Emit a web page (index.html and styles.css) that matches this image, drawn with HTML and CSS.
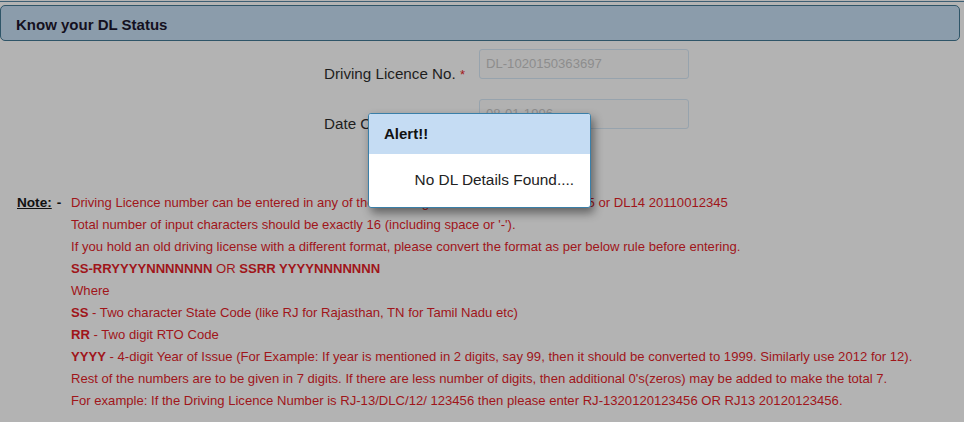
FILE: index.html
```html
<!DOCTYPE html>
<html>
<head>
<meta charset="utf-8">
<link rel="stylesheet" href="styles.css">
</head>
<body>
<div class="topline"></div>
<div class="panel-head">Know your DL Status</div>
<div class="form">
  <div class="row">
    <label class="lbl">Driving Licence No. <span class="req">*</span></label>
    <div class="inp">DL-1020150363697</div>
  </div>
  <div class="row">
    <label class="lbl">Date Of Birth <span class="req">*</span></label>
    <div class="inp">08-01-1996</div>
  </div>
</div>
<div class="note">
  <div class="note-label"><u>Note:</u><span class="dash">-</span></div>
  <div class="note-lines">
    <div>Driving Licence number can be entered in any of the following formats DL-1420110012345 or DL14 20110012345</div>
    <div>Total number of input characters should be exactly 16 (including space or '-').</div>
    <div>If you hold an old driving license with a different format, please convert the format as per below rule before entering.</div>
    <div><b>SS-RRYYYYNNNNNNN</b> OR <b>SSRR YYYYNNNNNNN</b></div>
    <div>Where</div>
    <div><b>SS</b> - Two character State Code (like RJ for Rajasthan, TN for Tamil Nadu etc)</div>
    <div><b>RR</b> - Two digit RTO Code</div>
    <div><b>YYYY</b> - 4-digit Year of Issue (For Example: If year is mentioned in 2 digits, say 99, then it should be converted to 1999. Similarly use 2012 for 12).</div>
    <div>Rest of the numbers are to be given in 7 digits. If there are less number of digits, then additional 0's(zeros) may be added to make the total 7.</div>
    <div>For example: If the Driving Licence Number is RJ-13/DLC/12/ 123456 then please enter RJ-1320120123456 OR RJ13 20120123456.</div>
  </div>
</div>
<div class="modal">
  <div class="modal-head">Alert!!</div>
  <div class="modal-body">No DL Details Found....</div>
</div>
</body>
</html>
```
FILE: styles.css
```css
html, body {
  margin: 0;
  padding: 0;
}
body {
  background: #b3b3b3;
  font-family: "Liberation Sans", Arial, sans-serif;
  width: 964px;
  height: 422px;
  overflow: hidden;
  position: relative;
}
.topline {
  height: 1px;
  margin-top: 1px;
  background: #3d5f74;
  margin-bottom: 3px;
}
.panel-head {
  border: 1px solid #2f5568;
  border-radius: 5px;
  background: #8b9cab;
  color: #141020;
  font-weight: bold;
  font-size: 15px;
  line-height: 37px;
  padding-left: 15px;
  box-sizing: border-box;
  width: 960px;
  height: 36px;
}
.form {
  display: flex;
  flex-direction: column;
  gap: 17px;
  margin-top: 8px;
}
.row {
  display: grid;
  grid-template-columns: 155px 210px;
  column-gap: 0;
  padding-left: 324px;
}
.lbl {
  text-align: left;
  font-size: 15.2px;
  color: #1e1e1e;
  padding-top: 16px;
}
.req {
  color: #a31a1a;
  font-size: 13px;
}
.inp {
  height: 30px;
  box-sizing: border-box;
  border: 1px solid #97a3ad;
  border-radius: 3px;
  background: #b1b1b1;
  color: #8d8d8d;
  font-size: 13.1px;
  line-height: 28px;
  padding-left: 6px;
}
.note {
  display: flex;
  margin-top: 60px;
  font-size: 13.1px;
  line-height: 22px;
  color: #a0151a;
}
.note-label {
  width: 54px;
  padding-left: 17px;
  font-weight: bold;
  font-size: 13.6px;
  color: #111;
  flex: none;
}
.dash {
  margin-left: 5px;
}
.note-lines b {
  font-weight: bold;
}
.modal {
  position: absolute;
  left: 368px;
  top: 113px;
  width: 223px;
  height: 95px;
  box-sizing: border-box;
  border: 1px solid #3a7fa8;
  border-radius: 3px;
  background: #fff;
  box-shadow: 3px 5px 10px rgba(0, 0, 0, 0.45);
  overflow: hidden;
}
.modal-head {
  height: 40px;
  background: #c5dcf3;
  font-weight: bold;
  font-size: 15px;
  color: #111;
  line-height: 40px;
  padding-left: 15px;
}
.modal-body {
  text-align: right;
  padding-right: 16px;
  font-size: 15.4px;
  color: #222;
  line-height: 52px;
}
```
